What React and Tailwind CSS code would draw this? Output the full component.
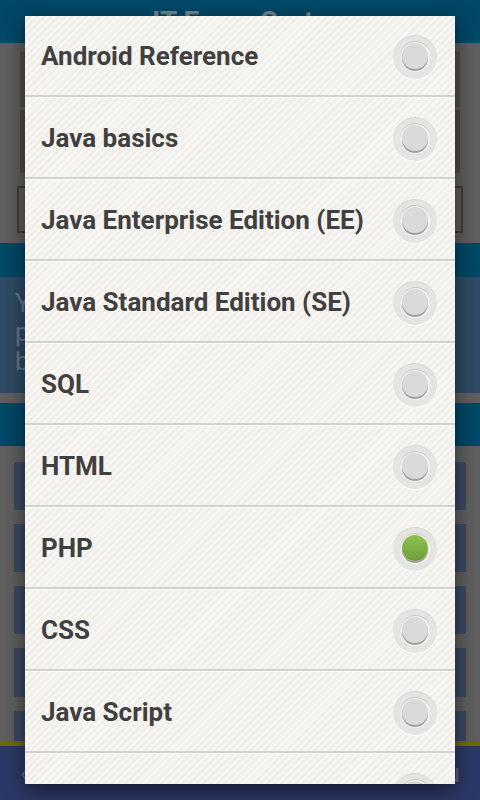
const topics = [
  'Android Reference',
  'Java basics',
  'Java Enterprise Edition (EE)',
  'Java Standard Edition (SE)',
  'SQL',
  'HTML',
  'PHP',
  'CSS',
  'Java Script',
  '',
];

const Radio = ({ checked }) => (
  <div className="w-[44px] h-[44px] rounded-full bg-[#e5e4e0] shadow-[0_1px_1px_rgba(255,255,255,0.9),inset_0_1px_1px_rgba(0,0,0,0.06)] flex items-center justify-center">
    <div className="w-[31px] h-[31px] rounded-full bg-[#f3f3f1] shadow-[inset_0_1px_1px_#c4c4c2] flex items-center justify-center">
      <div
        className={`w-[26px] h-[26px] rounded-full -mt-[2px] shadow-[0_2px_0_#a0a09e] ${
          checked ? 'bg-[linear-gradient(#90c450,#6c9d3a)]' : 'bg-[#dadad9]'
        }`}
      />
    </div>
  </div>
);

const Row = ({ label, checked }) => (
  <div className="shrink-0">
    <div className="h-[79px] flex items-center justify-between pl-[16px] pr-[18px] pt-[2px]">
      <span className="text-[26px] font-bold text-[#404040]">{label}</span>
      <Radio checked={checked} />
    </div>
    <div className="h-[2px] bg-[#d3d1cb]" />
    <div className="h-[1px] bg-[#ffffff]" />
  </div>
);

const Background = () => (
  <div className="flex flex-col w-[480px] h-[800px]">
    <div className="h-[43px] bg-[#014766] flex justify-center pt-[8px] text-[28px] font-bold text-[#6f8491] leading-none">
      IT Exam Certs
    </div>
    <div className="h-[200px] bg-[#5e5e5e] flex flex-col">
      <div className="mt-[8px] mx-[20px] h-[56px] bg-[#4f4f4f]" />
      <div className="mt-[3px] mx-[20px] h-[63px] bg-[#4c4c4c]" />
      <div className="mt-[13px] mx-[17px] h-[47px] border-2 border-[#3c3c3c]" />
    </div>
    <div className="h-[34px] bg-[#014766]" />
    <div className="h-[116px] bg-[#2e4a64] px-[15px] pt-[12px] text-[26px] leading-[29px] text-[#627789]">
      <p>You can practice for exams to</p>
      <p>prepare yourself for the upcoming</p>
      <p>big day</p>
    </div>
    <div className="h-[10px] bg-[#5e5e5e]" />
    <div className="h-[43px] bg-[#014766]" />
    <div className="h-[295px] bg-[#5e5e5e] px-[14px] pt-[16px] flex flex-col gap-[14px] overflow-hidden">
      <div className="h-[48px] shrink-0 bg-[#394862]" />
      <div className="h-[48px] shrink-0 bg-[#394862]" />
      <div className="h-[48px] shrink-0 bg-[#394862]" />
      <div className="h-[49px] shrink-0 bg-[#394862]" />
      <div className="h-[48px] shrink-0 bg-[#394862]" />
    </div>
    <div className="h-[5px] bg-[#6b6b00]" />
    <div className="flex-1 bg-[#2c3966] flex items-center justify-between px-[20px] text-[26px] text-[#5d6688]">
      <span>‹</span>
      <span>u</span>
    </div>
  </div>
);

export default function App() {
  return (
    <div className="relative w-[480px] h-[800px] overflow-hidden font-['Roboto',sans-serif]">
      <Background />
      <div className="absolute left-[25px] top-[16px] w-[430px] h-[768px] overflow-hidden flex flex-col bg-[repeating-linear-gradient(135deg,#f6f5f1_0px,#f6f5f1_3px,#f0eee9_3px,#f0eee9_5px)] shadow-[0_6px_18px_rgba(0,0,0,0.55)]">
        {topics.map((t, i) => (
          <Row key={i} label={t} checked={t === 'PHP'} />
        ))}
      </div>
    </div>
  );
}
